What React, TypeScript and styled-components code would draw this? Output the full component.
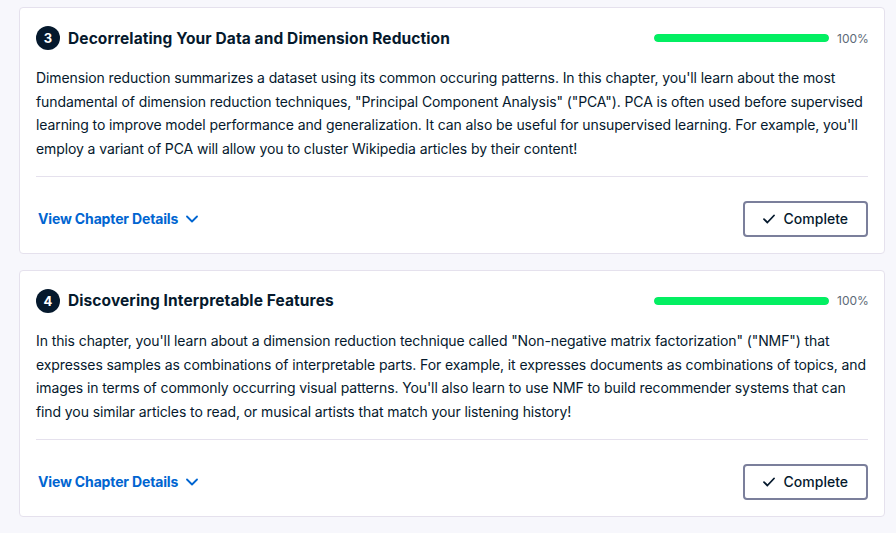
import React from 'react';
import styled, {createGlobalStyle} from 'styled-components';

const GlobalStyle = createGlobalStyle`
  body {
    margin: 0;
    background: #f7f7fc;
    font-family: Inter, "Noto Sans", sans-serif;
    color: #05192d;
  }
`;

const Page = styled.div`
  display: flex;
  flex-direction: column;
  gap: 16px;
  padding: 7px 11px 16px 19px;
`;

const Card = styled.section`
  background: #fff;
  border: 1px solid #e5e1ed;
  border-radius: 4px;
  padding: 15px 16px 16px 16px;
`;

const Header = styled.div`
  display: flex;
  align-items: center;
  height: 30px;
`;

const Badge = styled.span`
  display: inline-flex;
  align-items: center;
  justify-content: center;
  width: 24px;
  height: 24px;
  border-radius: 50%;
  background: #05192d;
  color: #fff;
  font-size: 13px;
  font-weight: 700;
  flex-shrink: 0;
`;

const Title = styled.h4`
  margin: 0 0 0 8px;
  font-size: 15.5px;
  font-weight: 700;
  letter-spacing: 0.1px;
  flex: 1;
`;

const Progress = styled.div`
  display: flex;
  align-items: center;
  gap: 8px;
`;

const Track = styled.div`
  width: 175px;
  height: 8px;
  border-radius: 4px;
  background: #e5e1ed;
  overflow: hidden;
`;

const Fill = styled.div`
  height: 100%;
  background: #03ef62;
  border-radius: 4px;
`;

const Percent = styled.span`
  font-size: 12px;
  color: #5d6a77;
  width: 31px;
`;

const Description = styled.p`
  margin: 13px 0 0;
  font-size: 14px;
  letter-spacing: -0.1px;
  line-height: 23.7px;
  color: #05192d;
  padding-bottom: 15px;
  border-bottom: 1px solid #e5e1ed;
`;

const Footer = styled.div`
  display: flex;
  align-items: center;
  justify-content: space-between;
  padding-top: 24px;
`;

const DetailsLink = styled.button`
  display: inline-flex;
  align-items: center;
  gap: 8px;
  background: none;
  border: none;
  padding: 0 0 0 2px;
  font-family: inherit;
  font-size: 14px;
  font-weight: 700;
  letter-spacing: -0.15px;
  color: #0065d1;
  cursor: pointer;
`;

const CompleteButton = styled.button`
  display: inline-flex;
  align-items: center;
  gap: 9px;
  height: 36px;
  padding: 0 18px;
  background: #fff;
  border: 2px solid #7b7f9b;
  border-radius: 4px;
  font-family: inherit;
  font-size: 14px;
  font-weight: 500;
  color: #05192d;
`;

const chapters = [
  {
    n: 3,
    title: 'Decorrelating Your Data and Dimension Reduction',
    text: 'Dimension reduction summarizes a dataset using its common occuring patterns. In this chapter, you\'ll learn about the most fundamental of dimension reduction techniques, "Principal Component Analysis" ("PCA"). PCA is often used before supervised learning to improve model performance and generalization. It can also be useful for unsupervised learning. For example, you\'ll employ a variant of PCA will allow you to cluster Wikipedia articles by their content!',
  },
  {
    n: 4,
    title: 'Discovering Interpretable Features',
    text: 'In this chapter, you\'ll learn about a dimension reduction technique called "Non-negative matrix factorization" ("NMF") that expresses samples as combinations of interpretable parts. For example, it expresses documents as combinations of topics, and images in terms of commonly occurring visual patterns. You\'ll also learn to use NMF to build recommender systems that can find you similar articles to read, or musical artists that match your listening history!',
  },
];

const Chevron = () => (
  <svg width="12" height="8" viewBox="0 0 12 8" fill="none">
    <path d="M1 1.5l5 5 5-5" stroke="#0065d1" strokeWidth="1.8" strokeLinecap="round" strokeLinejoin="round"/>
  </svg>
);

const Check = () => (
  <svg width="12" height="10" viewBox="0 0 12 10" fill="none">
    <path d="M1 5.2l3.4 3.3L11 1.5" stroke="#05192d" strokeWidth="1.8" strokeLinecap="round" strokeLinejoin="round"/>
  </svg>
);

export default function App() {
  return (
    <>
      <GlobalStyle/>
      <Page>
        {chapters.map(ch => (
          <Card key={ch.n}>
            <Header>
              <Badge>{ch.n}</Badge>
              <Title>{ch.title}</Title>
              <Progress>
                <Track><Fill style={{width: '100%'}}/></Track>
                <Percent>100%</Percent>
              </Progress>
            </Header>
            <Description>{ch.text}</Description>
            <Footer>
              <DetailsLink>View Chapter Details <Chevron/></DetailsLink>
              <CompleteButton><Check/> Complete</CompleteButton>
            </Footer>
          </Card>
        ))}
      </Page>
    </>
  );
}
